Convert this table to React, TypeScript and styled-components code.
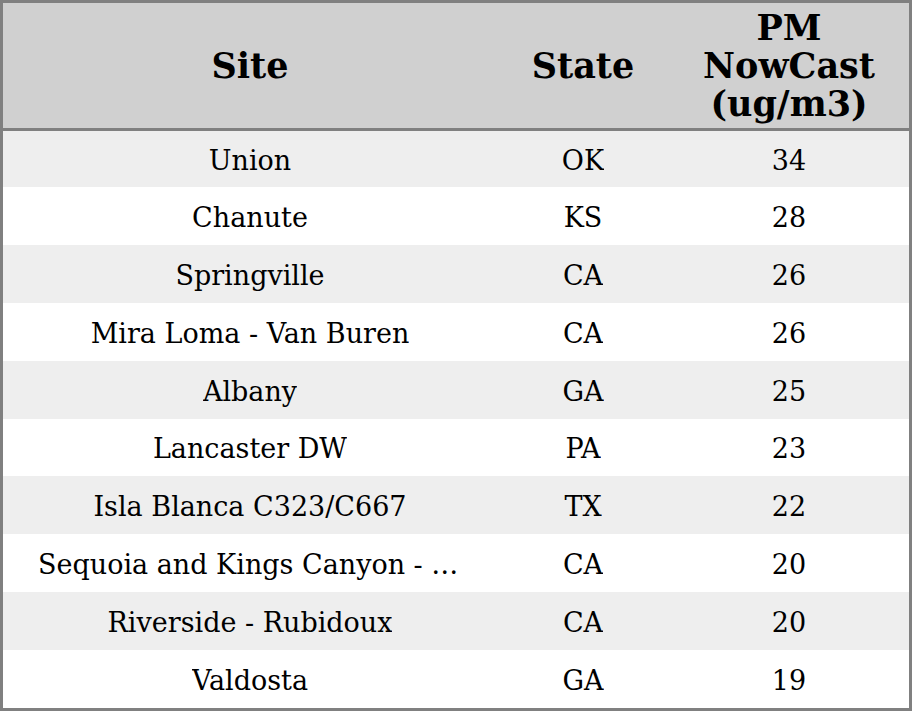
import React from 'react';
import styled, { createGlobalStyle } from 'styled-components';

const GlobalStyle = createGlobalStyle`
  html, body {
    margin: 0;
    padding: 0;
    background: #ffffff;
  }
  body {
    font-family: 'DejaVu Serif', 'Liberation Serif', serif;
    color: #000000;
  }
`;

const Table = styled.div`
  box-sizing: border-box;
  width: 912px;
  height: 711px;
  border: 3px solid #808080;
  display: grid;
  grid-template-columns: 494px 172px 240px;
  grid-template-rows: 128px 56px repeat(9, 1fr);
  overflow: hidden;
`;

const HeadCell = styled.div`
  box-sizing: border-box;
  background: #d0d0d0;
  border-bottom: 3px solid #808080;
  display: flex;
  align-items: center;
  justify-content: center;
  text-align: center;
  padding: 0 30px;
  font-size: 35px;
  font-weight: bold;
  line-height: 38px;
`;

const Cell = styled.div<{ $odd: boolean }>`
  box-sizing: border-box;
  background: ${(p) => (p.$odd ? '#eeeeee' : '#ffffff')};
  display: flex;
  align-items: center;
  justify-content: center;
  padding: 3px 35px 0;
  font-size: 27px;
  min-width: 0;
`;

const Text = styled.span`
  display: block;
  max-width: 100%;
  white-space: nowrap;
  overflow: hidden;
  text-overflow: ellipsis;
`;

const rows = [
  ['Union', 'OK', 34],
  ['Chanute', 'KS', 28],
  ['Springville', 'CA', 26],
  ['Mira Loma - Van Buren', 'CA', 26],
  ['Albany', 'GA', 25],
  ['Lancaster DW', 'PA', 23],
  ['Isla Blanca C323/C667', 'TX', 22],
  ['Sequoia and Kings Canyon - Ash Mountain', 'CA', 20],
  ['Riverside - Rubidoux', 'CA', 20],
  ['Valdosta', 'GA', 19],
];

const App = () => {
  return (
    <>
      <GlobalStyle />
      <Table>
        <HeadCell>Site</HeadCell>
        <HeadCell>State</HeadCell>
        <HeadCell>PM NowCast (ug/m3)</HeadCell>
        {rows.map((r, i) => (
          <React.Fragment key={i}>
            <Cell $odd={i % 2 === 0}>
              <Text>{r[0]}</Text>
            </Cell>
            <Cell $odd={i % 2 === 0}>
              <Text>{r[1]}</Text>
            </Cell>
            <Cell $odd={i % 2 === 0}>
              <Text>{r[2]}</Text>
            </Cell>
          </React.Fragment>
        ))}
      </Table>
    </>
  );
};

export default App;
